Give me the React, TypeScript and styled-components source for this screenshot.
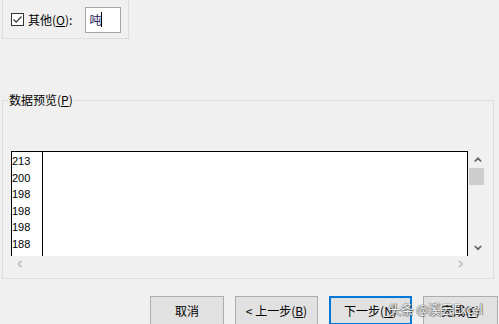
import React from "react";
import styled, { createGlobalStyle } from "styled-components";

const Global = createGlobalStyle`
  html, body { margin: 0; padding: 0; background: #f0f0f0; }
`;

const Page = styled.div`
  width: 499px;
  height: 324px;
  overflow: hidden;
  position: relative;
  background: #f0f0f0;
  font-family: "Noto Sans CJK SC", "Microsoft YaHei", sans-serif;
  font-size: 12px;
  color: #000;
`;

const TopGroup = styled.div`
  margin-left: 2px;
  width: 127px;
  height: 39px;
  box-sizing: border-box;
  border: 1px solid #dcdcdc;
  border-top: none;
  display: flex;
  align-items: center;
  padding: 1px 0 0 8px;
`;

const CheckBox = styled.span`
  width: 13px;
  height: 13px;
  box-sizing: border-box;
  border: 1px solid #333;
  background: #fff;
  display: inline-flex;
  align-items: center;
  justify-content: center;
`;

const CheckLabel = styled.span`
  margin-left: 4px;
  line-height: 16px;
  white-space: nowrap;
`;

const U = styled.span`
  text-decoration: underline;
  text-underline-offset: 1px;
`;

const TextInput = styled.div`
  margin-left: 13px;
  width: 36px;
  height: 26px;
  box-sizing: border-box;
  border: 1px solid #a5a5a5;
  background: #fff;
  display: flex;
  align-items: center;
  padding-left: 3px;
  font-size: 12px;
  color: #1a1a5a;
`;

const Caret = styled.span`
  width: 1px;
  height: 15px;
  background: #000;
  margin-left: 0px;
`;

const GroupBox = styled.div`
  position: relative;
  margin: 61px 0 0 2px;
  width: 492px;
  height: 179px;
  box-sizing: border-box;
  border: 1px solid #dcdcdc;
  padding: 50px 0 0 8px;
`;

const Legend = styled.span`
  position: absolute;
  top: -10px;
  left: 5px;
  padding: 0 1px;
  background: #f0f0f0;
  line-height: 18px;
`;

const ListWrap = styled.div`
  width: 475px;
  display: flex;
  flex-direction: column;
`;

const ListTop = styled.div`
  display: flex;
  height: 105px;
`;

const DataBox = styled.div`
  width: 458px;
  box-sizing: border-box;
  border: 1px solid #000;
  border-bottom: none;
  background: #fff;
  display: flex;
  padding-top: 1px;
`;

const Col = styled.div<{ $w?: number; $line?: boolean }>`
  width: ${(p) => (p.$w ? `${p.$w}px` : "auto")};
  flex: ${(p) => (p.$w ? "none" : "1")};
  border-right: ${(p) => (p.$line ? "1px solid #000" : "none")};
  margin-top: -1px;
  padding-top: 1px;
`;

const Cell = styled.div`
  font-family: "Liberation Sans", Arial, sans-serif;
  font-size: 11px;
  line-height: 16.6px;
  height: 16.6px;
`;

const VScroll = styled.div`
  width: 17px;
  display: flex;
  flex-direction: column;
  margin-left: 1px;
`;

const ScrollBtn = styled.div`
  width: 17px;
  height: 17px;
  display: flex;
  align-items: center;
  justify-content: center;
  flex: none;
`;

const Thumb = styled.div`
  width: 15px;
  height: 17px;
  background: #cdcdcd;
  flex: none;
`;

const Track = styled.div`
  flex: 1;
`;

const HScroll = styled.div`
  width: 458px;
  height: 16px;
  display: flex;
  justify-content: space-between;
  align-items: center;
`;

const ButtonRow = styled.div`
  display: flex;
  gap: 11px;
  margin: 17px 0 0 150px;
`;

const Button = styled.div<{ $w: number; $default?: boolean }>`
  width: ${(p) => p.$w}px;
  height: 29px;
  box-sizing: border-box;
  background: #e1e1e1;
  border: ${(p) => (p.$default ? "2px solid #0078d7" : "1px solid #adadad")};
  display: flex;
  align-items: center;
  justify-content: center;
  white-space: nowrap;
  flex: none;
`;

const Watermark = styled.div`
  position: absolute;
  left: 388px;
  top: 299px;
  font-size: 13px;
  color: rgba(255, 255, 255, 0.92);
  text-shadow: 0 0 1px #555, 0 0 1px #555, 1px 1px 1px rgba(0, 0, 0, 0.35);
  white-space: nowrap;
  letter-spacing: -0.3px;
`;

const Chevron = ({ dir, color }: { dir: "up" | "down" | "left" | "right"; color: string }) => {
  const pts: Record<string, string> = {
    up: "0.8,4.5 4,1.3 7.2,4.5",
    down: "0.8,1 4,4.2 7.2,1",
    left: "4.5,0.8 1.3,4 4.5,7.2",
    right: "1,0.8 4.2,4 1,7.2",
  };
  const horiz = dir === "up" || dir === "down";
  return (
    <svg width={horiz ? 8 : 6} height={horiz ? 6 : 8} viewBox={horiz ? "0 0 8 6" : "0 0 6 8"}>
      <polyline points={pts[dir]} fill="none" stroke={color} strokeWidth={1.7} />
    </svg>
  );
};

const values = ["213", "200", "198", "198", "198", "188"];

export default function App() {
  return (
    <Page>
      <Global />
      <TopGroup>
        <CheckBox>
          <svg width="11" height="11" viewBox="0 0 11 11">
            <polyline points="1.5,5.5 4.2,8.2 9.5,2.5" fill="none" stroke="#333" strokeWidth={1.2} />
          </svg>
        </CheckBox>
        <CheckLabel>
          其他(<U>O</U>):
        </CheckLabel>
        <TextInput>
          吨<Caret />
        </TextInput>
      </TopGroup>

      <GroupBox>
        <Legend>
          数据预览(<U>P</U>)
        </Legend>
        <ListWrap>
          <ListTop>
            <DataBox>
              <Col $w={30} $line>
                {values.map((v, i) => (
                  <Cell key={i}>{v}</Cell>
                ))}
              </Col>
              <Col />
            </DataBox>
            <VScroll>
              <ScrollBtn>
                <Chevron dir="up" color="#606060" />
              </ScrollBtn>
              <Thumb />
              <Track />
              <ScrollBtn>
                <Chevron dir="down" color="#606060" />
              </ScrollBtn>
            </VScroll>
          </ListTop>
          <HScroll>
            <ScrollBtn>
              <Chevron dir="left" color="#c2c2c2" />
            </ScrollBtn>
            <ScrollBtn>
              <Chevron dir="right" color="#c2c2c2" />
            </ScrollBtn>
          </HScroll>
        </ListWrap>
      </GroupBox>

      <ButtonRow>
        <Button $w={74}>取消</Button>
        <Button $w={83}>
          &lt; 上一步(<U>B</U>)
        </Button>
        <Button $w={83} $default>
          下一步(<U>N</U>)
        </Button>
        <Button $w={75}>
          完成(<U>F</U>)
        </Button>
      </ButtonRow>

      <Watermark>头条 @溪云Excel</Watermark>
    </Page>
  );
}
